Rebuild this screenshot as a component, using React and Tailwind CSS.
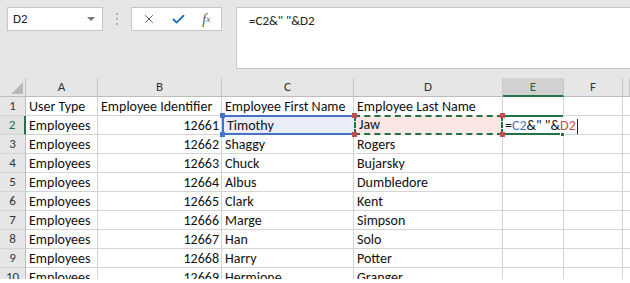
import React from "react";
import { X, Check } from "lucide-react";

const FONT = { fontFamily: "Carlito, Lato, 'Liberation Sans', sans-serif" };

const rows = [
  ["User Type", "Employee Identifier", "Employee First Name", "Employee Last Name"],
  ["Employees", "12661", "Timothy", "Jaw"],
  ["Employees", "12662", "Shaggy", "Rogers"],
  ["Employees", "12663", "Chuck", "Bujarsky"],
  ["Employees", "12664", "Albus", "Dumbledore"],
  ["Employees", "12665", "Clark", "Kent"],
  ["Employees", "12666", "Marge", "Simpson"],
  ["Employees", "12667", "Han", "Solo"],
  ["Employees", "12668", "Harry", "Potter"],
  ["Employees", "12669", "Hermione", "Granger"],
];

const letters = ["A", "B", "C", "D", "E", "F", ""];

function Handle({ className }) {
  return <span className={`absolute w-[5px] h-[5px] z-20 ${className}`} />;
}

function Toolbar() {
  return (
    <div className="flex items-start h-[78px] bg-[#e6e6e6] pt-[7px] pl-[7px]">
      {/* name box */}
      <div className="flex items-center justify-between w-[96px] h-[24px] bg-white border border-[#c6c6c6] pl-[5px] pr-[7px] text-[13px] text-[#222]">
        <span>D2</span>
        <span className="w-0 h-0 border-l-[4px] border-r-[4px] border-t-[4px] border-l-transparent border-r-transparent border-t-[#777]" />
      </div>
      {/* grip dots */}
      <div className="w-[28px] h-[24px] flex flex-col items-center justify-center gap-[3px]">
        <span className="w-[2px] h-[2px] bg-[#b0b0b0]" />
        <span className="w-[2px] h-[2px] bg-[#b0b0b0]" />
        <span className="w-[2px] h-[2px] bg-[#b0b0b0]" />
      </div>
      {/* buttons */}
      <div className="flex items-center w-[91px] h-[24px] bg-white border border-[#c6c6c6]">
        <div className="w-[34px] flex justify-center">
          <X size={14} strokeWidth={1.6} color="#555" />
        </div>
        <div className="w-[26px] flex justify-center">
          <Check size={15} strokeWidth={3} color="#1e6fc1" />
        </div>
        <div className="w-[30px] flex justify-center text-[#555] italic" style={{ fontFamily: "'Liberation Serif', serif" }}>
          <span className="text-[14px]">f</span>
          <span className="text-[9px] mt-[4px]">x</span>
        </div>
      </div>
      {/* formula box */}
      <div className="ml-[14px] flex-1 h-[62px] bg-white border border-r-0 border-[#c6c6c6] pl-[12px] pt-[3px] text-[13px] text-[#222]">
        =C2&amp;" "&amp;D2
      </div>
    </div>
  );
}

export default function App() {
  return (
    <div className="w-[630px] h-[283px] bg-white overflow-hidden" style={FONT}>
      <Toolbar />
      <div className="h-[201px] overflow-hidden">
        <div className="grid grid-cols-[26px_72px_124px_132px_149px_61px_59px_1fr] auto-rows-[19px] text-[14px] text-[#111]">
          {/* header row */}
          <div className="relative bg-[#e6e6e6] border-r border-b border-[#bdbdbd]">
            <svg className="absolute right-[2px] bottom-[2px]" width="12" height="12" viewBox="0 0 12 12">
              <polygon points="12,0 12,12 0,12" fill="#b9b9b9" />
            </svg>
          </div>
          {letters.map((l, i) => (
            <div
              key={i}
              className={`flex items-center justify-center text-[13px] border-r border-[#c6c6c6] ${
                l === "E"
                  ? "bg-[#d2d2d2] text-[#1d6b40] border-b-2 border-b-[#217346]"
                  : "bg-[#e6e6e6] text-[#333] border-b border-b-[#bdbdbd]"
              }`}
            >
              {l}
            </div>
          ))}

          {rows.map((r, ri) => {
            const rn = ri + 1;
            const active = rn === 2;
            return (
              <React.Fragment key={rn}>
                <div
                  className={`flex items-center justify-center text-[13px] border-b border-[#d4d4d4] ${
                    active
                      ? "bg-[#e1e1e1] text-[#1d6b40] border-r-2 border-r-[#217346]"
                      : "bg-[#e6e6e6] text-[#333] border-r border-r-[#bdbdbd]"
                  }`}
                >
                  {rn}
                </div>
                <div className="pl-[3px] leading-[19px] whitespace-nowrap border-r border-b border-[#d4d4d4]">{r[0]}</div>
                <div className={`pr-[2px] leading-[19px] whitespace-nowrap border-r border-b border-[#d4d4d4] ${rn === 1 ? "pl-[3px]" : "text-right"}`}>
                  {r[1]}
                </div>
                {active ? (
                  <>
                    <div className="relative pl-[3px] leading-[17px] bg-[#e8edf7] border-y-2 border-l-2 border-[#4472c4] -mt-[1px] h-[20px]">
                      {r[2]}
                      <Handle className="bg-[#4472c4] -left-[4px] -top-[4px]" />
                      <Handle className="bg-[#4472c4] -left-[4px] -bottom-[4px]" />
                    </div>
                    <div className="relative pl-[3px] leading-[16px] bg-[#fbe6e6] border-2 border-dashed border-[#217346] -mt-[1px] h-[20px]">
                      {r[3]}
                      <Handle className="bg-[#c0504d] -left-[4px] -top-[4px]" />
                      <Handle className="bg-[#c0504d] -left-[4px] -bottom-[4px]" />
                      <Handle className="bg-[#c0504d] -right-[4px] -top-[4px]" />
                      <Handle className="bg-[#c0504d] -right-[4px] -bottom-[4px]" />
                    </div>
                    <div className="relative col-span-2 border-r border-b border-[#d4d4d4] whitespace-nowrap leading-[19px] pl-[2px]">
                      <span className="absolute left-0 -top-[1px] w-[60px] h-[2px] bg-[#217346]" />
                      <span className="absolute left-0 -bottom-[1px] w-[60px] h-[2px] bg-[#217346]" />
                      <span className="absolute left-[57px] -bottom-[3px] w-[5px] h-[5px] bg-[#217346] border border-white z-20" />
                      <span>=</span>
                      <span className="text-[#4472c4]">C2</span>
                      <span>&amp;" "&amp;</span>
                      <span className="text-[#c0504d]">D2</span>
                      <span className="inline-block w-[1px] h-[15px] bg-[#222] align-middle ml-[1px]" />
                    </div>
                    <div className="border-b border-[#d4d4d4]" />
                  </>
                ) : (
                  <>
                    <div className="pl-[3px] leading-[19px] whitespace-nowrap border-r border-b border-[#d4d4d4]">{r[2]}</div>
                    <div className="pl-[3px] leading-[19px] whitespace-nowrap border-r border-b border-[#d4d4d4]">{r[3]}</div>
                    <div className="border-r border-b border-[#d4d4d4]" />
                    <div className="border-r border-b border-[#d4d4d4]" />
                    <div className="border-b border-[#d4d4d4]" />
                  </>
                )}
              </React.Fragment>
            );
          })}
        </div>
      </div>
    </div>
  );
}
